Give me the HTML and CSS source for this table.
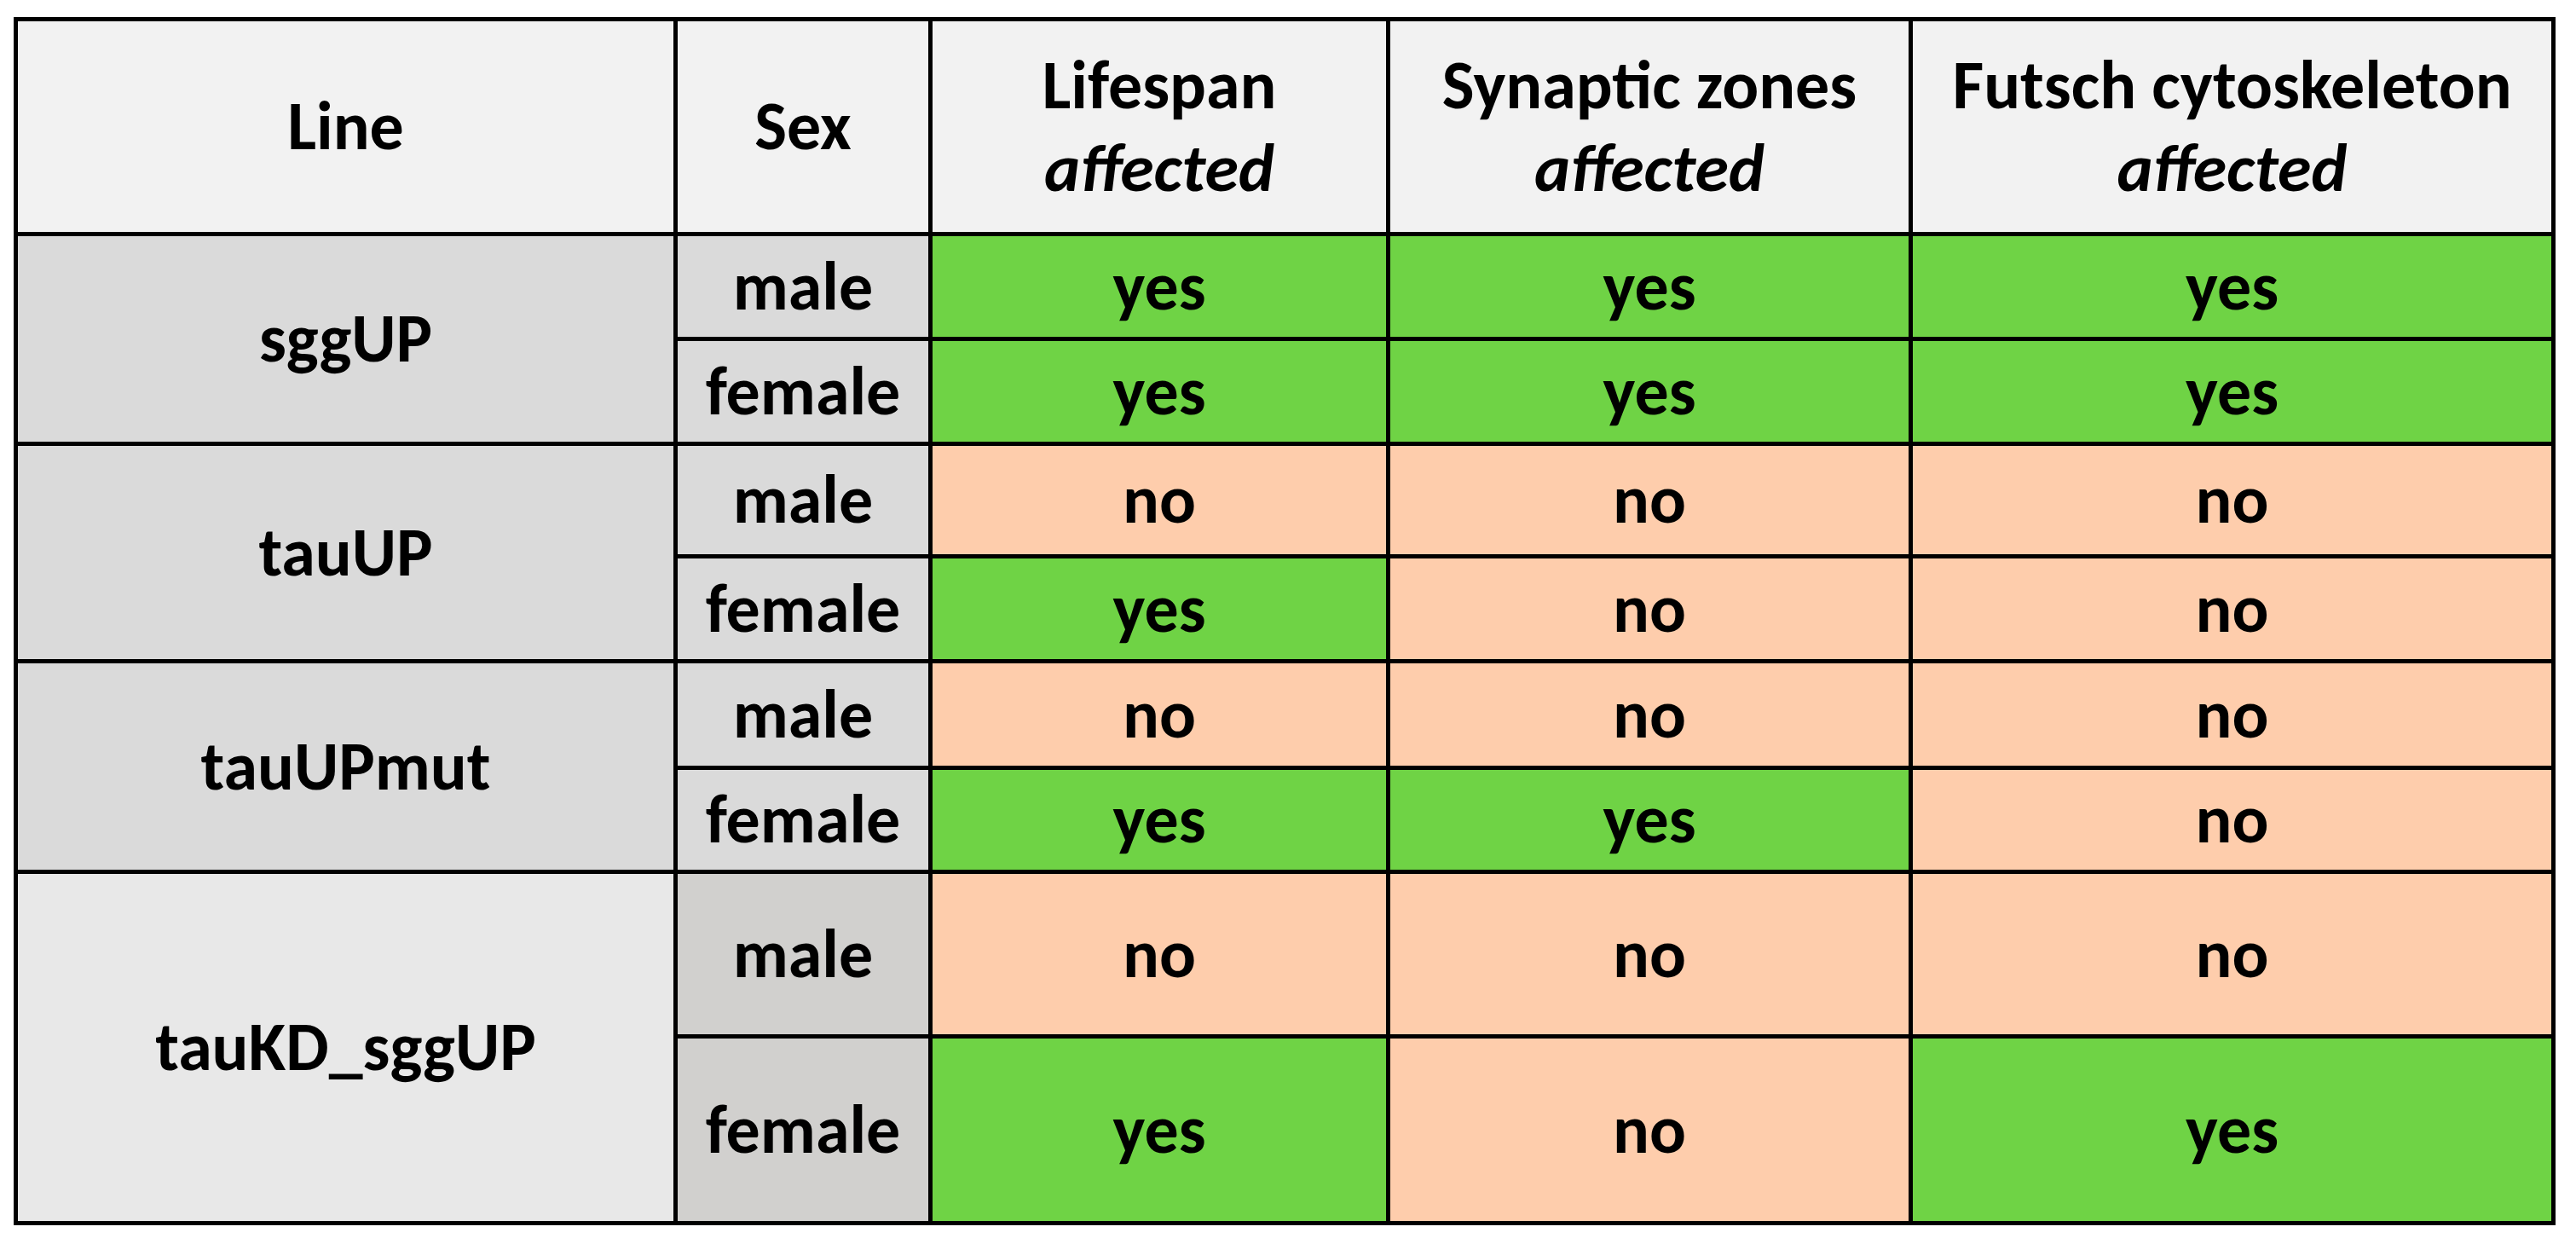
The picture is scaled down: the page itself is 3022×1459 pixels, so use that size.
FILE: index.html
```html
<!DOCTYPE html>
<html lang="en">
<head>
<meta charset="utf-8">
<title>Phenotype table</title>
<link rel="stylesheet" href="styles.css">
</head>
<body>
<table class="grid">
  <colgroup>
    <col class="c-line">
    <col class="c-sex">
    <col class="c-life">
    <col class="c-syn">
    <col class="c-fut">
  </colgroup>
  <thead>
    <tr class="r-head">
      <th>Line</th>
      <th>Sex</th>
      <th>Lifespan<br><em>affected</em></th>
      <th>Synaptic zones<br><em>affected</em></th>
      <th>Futsch cytoskeleton<br><em>affected</em></th>
    </tr>
  </thead>
  <tbody>
    <tr class="r-a">
      <td class="line" rowspan="2">sggUP</td>
      <td class="sex">male</td>
      <td class="yes">yes</td><td class="yes">yes</td><td class="yes">yes</td>
    </tr>
    <tr class="r-b">
      <td class="sex">female</td>
      <td class="yes">yes</td><td class="yes">yes</td><td class="yes">yes</td>
    </tr>
    <tr class="r-c">
      <td class="line" rowspan="2">tauUP</td>
      <td class="sex">male</td>
      <td class="no">no</td><td class="no">no</td><td class="no">no</td>
    </tr>
    <tr class="r-d">
      <td class="sex">female</td>
      <td class="yes">yes</td><td class="no">no</td><td class="no">no</td>
    </tr>
    <tr class="r-e">
      <td class="line" rowspan="2">tauUPmut</td>
      <td class="sex">male</td>
      <td class="no">no</td><td class="no">no</td><td class="no">no</td>
    </tr>
    <tr class="r-f">
      <td class="sex">female</td>
      <td class="yes">yes</td><td class="yes">yes</td><td class="no">no</td>
    </tr>
    <tr class="r-g">
      <td class="line light" rowspan="2">tauKD_sggUP</td>
      <td class="sex dark">male</td>
      <td class="no">no</td><td class="no">no</td><td class="no">no</td>
    </tr>
    <tr class="r-h">
      <td class="sex dark">female</td>
      <td class="yes">yes</td><td class="no">no</td><td class="yes">yes</td>
    </tr>
  </tbody>
</table>
</body>
</html>
```

FILE: styles.css
```css
html, body {
  margin: 0;
  padding: 0;
  background: #ffffff;
}

body {
  padding: 20px 0 0 16px;
  font-family: "Carlito", "Lato", "Liberation Sans", sans-serif;
  font-weight: 700;
  color: #000000;
}

.grid {
  border-collapse: collapse;
  table-layout: fixed;
  width: 2982px;
  font-size: 80px;
  line-height: 1.21;
}

.c-line { width: 774px; }
.c-sex { width: 299px; }
.c-life { width: 537px; }
.c-syn { width: 613px; }
.c-fut { width: 754px; }

.grid th,
.grid td {
  border: 5px solid #000000;
  padding: 0;
  text-align: center;
  vertical-align: middle;
  font-weight: 700;
}

.grid th {
  background: #f2f2f2;
}

.grid th em {
  font-style: italic;
}

.r-head { height: 252px; }
.r-a { height: 123px; }
.r-b { height: 123px; }
.r-c { height: 132px; }
.r-d { height: 123px; }
.r-e { height: 125px; }
.r-f { height: 122px; }
.r-g { height: 193px; }
.r-h { height: 219px; }

.line { background: #dadada; }
.line.light { background: #e8e8e8; }
.sex { background: #dadada; }
.sex.dark { background: #d1d0ce; }

.yes { background: #6fd345; }
.no { background: #fecdac; }
```
